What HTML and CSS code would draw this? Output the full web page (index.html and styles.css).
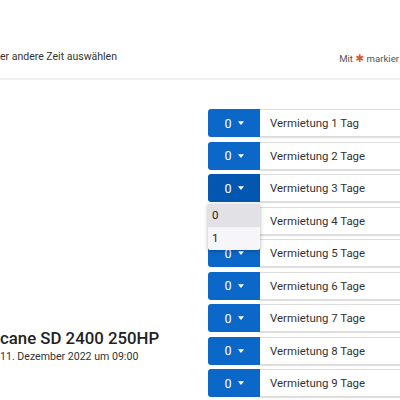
FILE: index.html
```html
<!DOCTYPE html>
<html lang="de">
<head>
<meta charset="utf-8">
<link rel="stylesheet" href="styles.css">
</head>
<body>
<div class="page">
  <header class="header">
    <div class="header-left">er andere Zeit auswählen</div>
    <div class="header-right">Mit <span class="req">✱</span> markier</div>
  </header>
  <main class="main">
    <section class="info">
      <h1 class="title">cane SD 2400 250HP</h1>
      <div class="date">11. Dezember 2022 um 09:00</div>
    </section>
    <section class="rows">
      <div class="row"><div class="qty">0<svg class="caret" viewBox="0 0 8 5"><path d="M0 0h8L4 5z"/></svg></div><div class="label">Vermietung 1 Tag</div></div>
      <div class="row"><div class="qty">0<svg class="caret" viewBox="0 0 8 5"><path d="M0 0h8L4 5z"/></svg></div><div class="label">Vermietung 2 Tage</div></div>
      <div class="row open"><div class="qty active">0<svg class="caret" viewBox="0 0 8 5"><path d="M0 0h8L4 5z"/></svg></div><div class="label">Vermietung 3 Tage</div>
        <ul class="menu"><li class="opt hl">0</li><li class="opt">1</li></ul>
      </div>
      <div class="row"><div class="qty">0<svg class="caret" viewBox="0 0 8 5"><path d="M0 0h8L4 5z"/></svg></div><div class="label">Vermietung 4 Tage</div></div>
      <div class="row"><div class="qty">0<svg class="caret" viewBox="0 0 8 5"><path d="M0 0h8L4 5z"/></svg></div><div class="label">Vermietung 5 Tage</div></div>
      <div class="row"><div class="qty">0<svg class="caret" viewBox="0 0 8 5"><path d="M0 0h8L4 5z"/></svg></div><div class="label">Vermietung 6 Tage</div></div>
      <div class="row"><div class="qty">0<svg class="caret" viewBox="0 0 8 5"><path d="M0 0h8L4 5z"/></svg></div><div class="label">Vermietung 7 Tage</div></div>
      <div class="row"><div class="qty">0<svg class="caret" viewBox="0 0 8 5"><path d="M0 0h8L4 5z"/></svg></div><div class="label">Vermietung 8 Tage</div></div>
      <div class="row"><div class="qty">0<svg class="caret" viewBox="0 0 8 5"><path d="M0 0h8L4 5z"/></svg></div><div class="label">Vermietung 9 Tage</div></div>
    </section>
  </main>
</div>
</body>
</html>
```

FILE: styles.css
```css
html, body {
  margin: 0;
  padding: 0;
  background: #fff;
  overflow: hidden;
}
.page {
  width: 400px;
  height: 400px;
  overflow: hidden;
  font-family: Roboto, "Liberation Sans", sans-serif;
  color: #333;
}
.header {
  border-bottom: 2px solid #f0f0f2;
  display: flex;
  justify-content: space-between;
  align-items: flex-start;
  padding-top: 49px;
  box-sizing: border-box;
  height: 80px;
}
.header-left {
  font-size: 10.5px;
  line-height: 16px;
  white-space: nowrap;
  color: #333;
}
.header-right {
  font-size: 9.6px;
  line-height: 16px;
  white-space: nowrap;
  color: #555;
  margin-top: 1px;
  padding-right: 1px;
}
.req {
  color: #e0562a;
  font-family: "DejaVu Sans", sans-serif;
  font-size: 10.5px;
}
.main {
  display: flex;
  padding-top: 29px;
}
.info {
  width: 208px;
  flex: none;
  padding-top: 219px;
}
.title {
  margin: 0;
  font-size: 16.8px;
  line-height: 21px;
  font-weight: 500;
  color: #222;
  white-space: nowrap;
}
.date {
  font-size: 10.6px;
  line-height: 14px;
  margin-top: 1px;
  color: #333;
  white-space: nowrap;
}
.rows {
  width: 260px;
  flex: none;
}
.row {
  position: relative;
  display: flex;
  height: 28px;
  margin-bottom: 4.5px;
}
.qty {
  width: 52px;
  flex: none;
  background: #0b68c9;
  color: #fff;
  border-radius: 3px 0 0 3px;
  display: flex;
  align-items: center;
  justify-content: center;
  gap: 6px;
  font-size: 12.5px;
}
.qty.active {
  background: #0457b0;
}
.caret {
  width: 6px;
  height: 4px;
  fill: #fff;
}
.label {
  flex: 1;
  border: 1px solid #dcdcdc;
  border-left: none;
  box-shadow: 0 1px 1px rgba(0,0,0,0.12);
  padding-left: 10px;
  display: flex;
  align-items: center;
  font-size: 11.4px;
  color: #333;
}
.menu {
  position: absolute;
  left: 0;
  top: 30px;
  width: 52px;
  margin: 0;
  padding: 0;
  list-style: none;
  background: #f6f6f8;
  box-shadow: 0 1px 4px rgba(0,0,0,0.3);
  border-radius: 0 0 2px 2px;
  z-index: 5;
}
.opt {
  height: 23px;
  line-height: 23px;
  padding-left: 4px;
  font-size: 11.5px;
  color: #222;
}
.opt.hl {
  background: #e2e2e6;
}
```
